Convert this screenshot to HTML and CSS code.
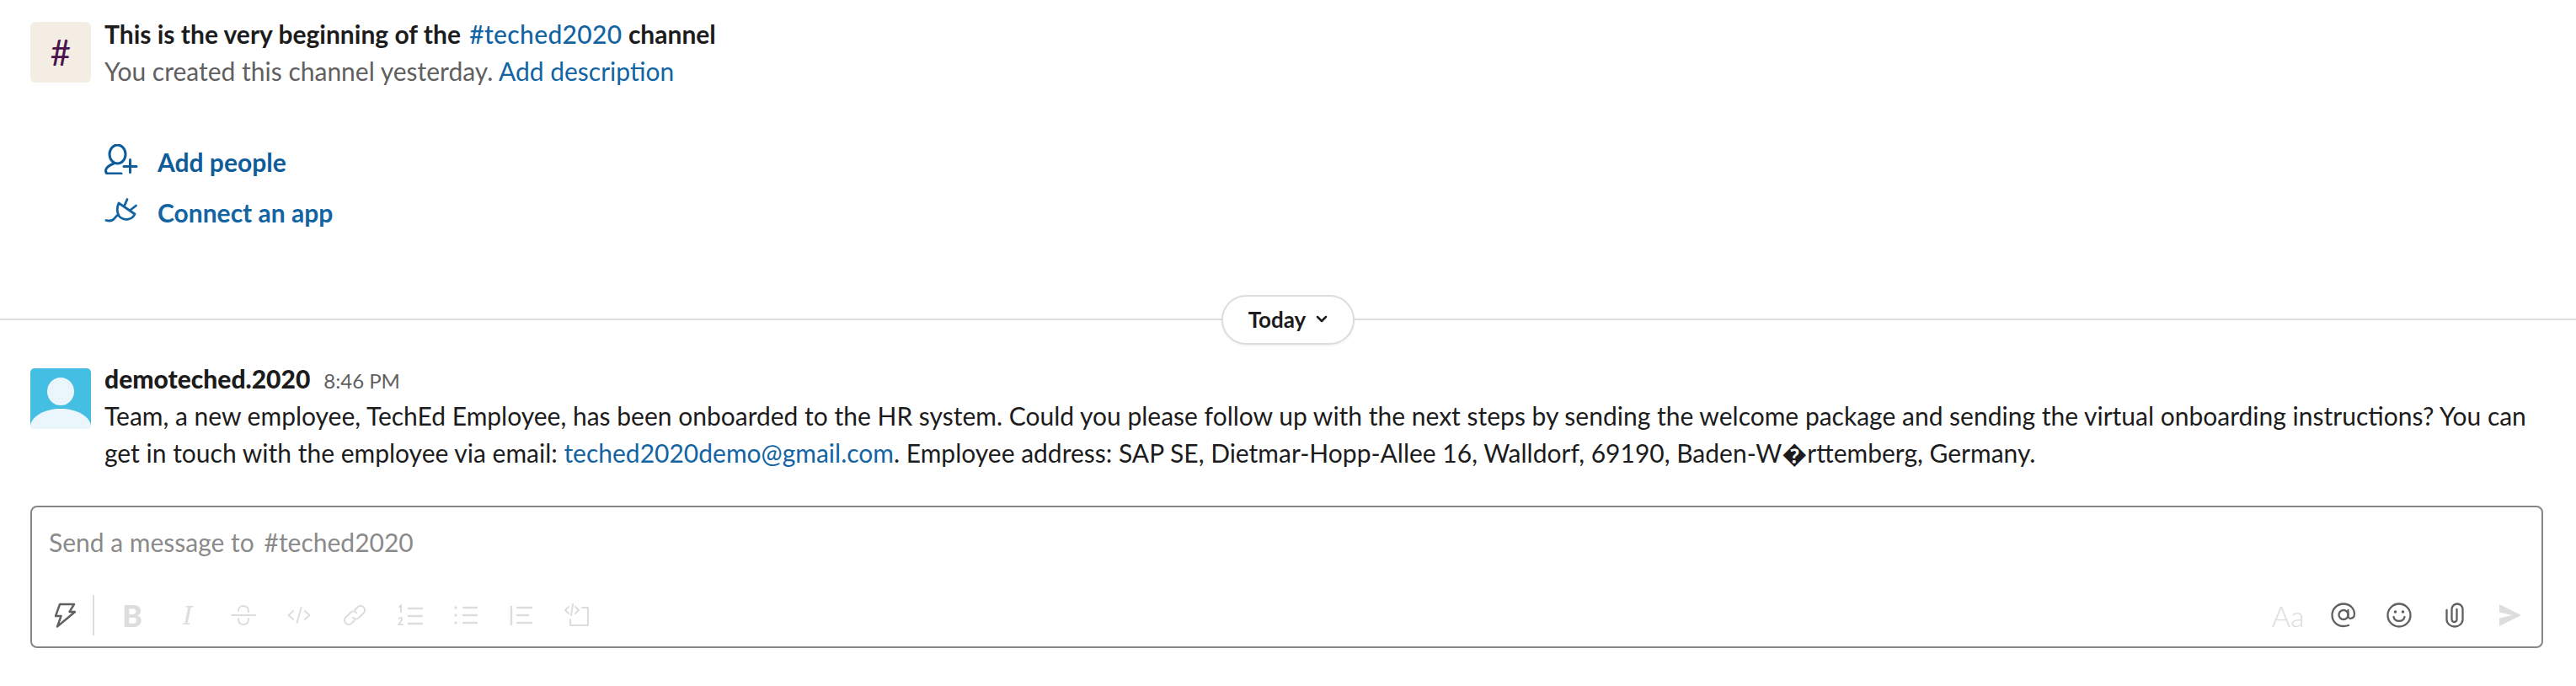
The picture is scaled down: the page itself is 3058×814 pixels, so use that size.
FILE: index.html
```html
<!DOCTYPE html>
<html>
  <head>
    <meta charset="utf-8" />
    <title>teched2020</title>
    <link rel="stylesheet" href="styles.css">
  </head>
  <body>
    <section class="intro">
      <div class="intro-head">
        <div class="channel-icon">#</div>
        <div class="intro-text">
          <div class="intro-title">This is the very beginning of the <a class="mention">#teched2020</a> channel</div>
          <div class="intro-sub">You created this channel yesterday. <a class="link">Add description</a></div>
        </div>
      </div>
      <div class="intro-actions">
        <a class="action action-people">
          <svg class="action-icon" width="40" height="36" viewBox="0 0 40 36" fill="none" stroke="#0f5c9a" stroke-width="3" stroke-linecap="round">
            <ellipse cx="15.500" cy="12" rx="9.500" ry="11"/>
            <path d="M11 23C5 25 1 29 1.500 32C1.500 34 3 35 5 35H20"/>
            <path d="M23 26.500H38M30.500 18.500V33.500"/>
          </svg>
          <span>Add people</span>
        </a>
        <a class="action">
          <svg class="action-icon" width="40" height="30" viewBox="0 0 40 30" fill="none" stroke="#1264a3" stroke-width="2.800" stroke-linecap="round" stroke-linejoin="round">
            <path d="M2 27.500C6 28.500 10 28 12 25C13.500 23 14.500 22 16.500 20.500"/>
            <path d="M27 2.500L23.500 10.500M37.500 10L30.500 15.500"/>
            <path d="M17 7L36 20C33 27 24 28 19 24C15 21 14 13 17 7Z"/>
          </svg>
          <span>Connect an app</span>
        </a>
      </div>
    </section>

    <div class="day-divider">
      <button class="day-pill">
        Today
        <svg width="14" height="10" viewBox="0 0 14 10" fill="none" stroke="#1d1c1d" stroke-width="2.500" stroke-linecap="round" stroke-linejoin="round"><path d="M2 2L7 7L12 2"/></svg>
      </button>
    </div>

    <div class="message">
      <svg class="avatar" width="72" height="72" viewBox="0 0 72 72">
        <rect width="72" height="72" rx="5" fill="#44bfe3"/>
        <ellipse cx="36" cy="27.500" rx="16" ry="16.500" fill="#eaf6fc"/>
        <path d="M0 68C2 56 18 48 36 48C54 48 70 56 72 68C72 70.500 70.500 72 68 72H4C1.500 72 0 70.500 0 68Z" fill="#eaf6fc"/>
      </svg>
      <div class="message-body">
        <div class="message-meta"><span class="sender">demoteched.2020</span><span class="time">8:46 PM</span></div>
        <div class="message-text">Team, a new employee, TechEd Employee, has been onboarded to the HR system. Could you please follow up with the next steps by sending the welcome package and sending the virtual onboarding instructions? You can get in touch with the employee via email: <a class="link">teched2020demo@gmail.com</a>. Employee address: SAP SE, Dietmar-Hopp-Allee 16, Walldorf, 69190, Baden-W&#xFFFD;rttemberg, Germany.</div>
      </div>
    </div>

    <div class="composer">
      <div class="composer-input">Send a message to <span class="composer-channel">#teched2020</span></div>
      <div class="toolbar">
        <div class="toolbar-left">
          <span class="tool">
            <svg width="26" height="30" viewBox="0 0 26 30" fill="none" stroke="#616061" stroke-width="2.400" stroke-linejoin="round">
              <path d="M7 2H24L18.500 11H25L4 28.500L8.500 16H2Z"/>
            </svg>
          </span>
          <span class="tool-sep"></span>
          <span class="tool tool-b">B</span>
          <span class="tool tool-i">I</span>
          <span class="tool">
            <svg width="30" height="26" viewBox="0 0 30 26" fill="none" stroke="#dddddd" stroke-width="2" stroke-linecap="round">
              <path d="M1 13H29"/>
              <path d="M21 9C21 5 18.500 2 15 2C11.500 2 9 4.500 9 8"/>
              <path d="M9 17C9 21.500 11.500 24 15 24C18.500 24 21 21.500 21 17"/>
            </svg>
          </span>
          <span class="tool">
            <svg width="28" height="22" viewBox="0 0 28 22" fill="none" stroke="#dddddd" stroke-width="2" stroke-linecap="round" stroke-linejoin="round">
              <path d="M7 6L1.500 11L7 16M21 6L26.500 11L21 16M16.500 2L11.500 20"/>
            </svg>
          </span>
          <span class="tool">
            <svg width="28" height="30" viewBox="0 0 28 30" fill="none" stroke="#dddddd" stroke-width="2" stroke-linecap="round">
              <path d="M14 9L18 5A5 5 0 0 1 25 12L19 18A5 5 0 0 1 12 18"/>
              <path d="M14 21L10 25A5 5 0 0 1 3 18L9 12A5 5 0 0 1 16 12"/>
            </svg>
          </span>
          <span class="tool">
            <svg width="30" height="28" viewBox="0 0 30 28" fill="none" stroke="#dddddd" stroke-width="2" stroke-linecap="round">
              <path d="M2 4L4 2.500V10M1.500 18C3 16 6 17 5 19.500L1.500 25H6"/>
              <path d="M13 6H29M13 15H29M13 24H29" stroke-width="2.500"/>
            </svg>
          </span>
          <span class="tool">
            <svg width="28" height="24" viewBox="0 0 28 24" fill="none" stroke="#dddddd" stroke-width="2.500" stroke-linecap="round">
              <path d="M2 3V3.100M2 12V12.100M2 21V21.100" stroke-width="3.500"/>
              <path d="M11 3H27M11 12H27M11 21H27"/>
            </svg>
          </span>
          <span class="tool">
            <svg width="28" height="24" viewBox="0 0 28 24" fill="none" stroke="#dddddd" stroke-width="2.500" stroke-linecap="round">
              <path d="M2 2V23"/>
              <path d="M9 3H26M9 12H22M9 21H26"/>
            </svg>
          </span>
          <span class="tool">
            <svg width="30" height="28" viewBox="0 0 30 28" fill="none" stroke="#dddddd" stroke-width="2" stroke-linecap="round" stroke-linejoin="round">
              <path d="M5 4L1 8L5 12M13 4L17 8L13 12M10 1L8 14"/>
              <path d="M21 5H28V26H7V19"/>
            </svg>
          </span>
        </div>
        <div class="toolbar-right">
          <span class="tool tool-aa">Aa</span>
          <span class="tool">
            <svg width="30" height="30" viewBox="0 0 30 30" fill="none" stroke="#616061" stroke-width="2.300" stroke-linecap="round">
              <circle cx="15" cy="14.500" r="5.500"/>
              <path d="M20.500 9V16C20.500 20.500 28 19.500 28 13.500C28 6.500 22 1.500 15 1.500C7.500 1.500 1.500 7.500 1.500 15C1.500 22.500 7.500 28 15 28C17 28 19 27.700 21 27"/>
            </svg>
          </span>
          <span class="tool">
            <svg width="30" height="30" viewBox="0 0 30 30" fill="none" stroke="#616061" stroke-width="2.300" stroke-linecap="round">
              <circle cx="15" cy="15" r="13.500"/>
              <path d="M8.500 17C10 23.500 20 23.500 21.500 17"/>
              <circle cx="10.500" cy="11" r="1.800" fill="#616061" stroke="none"/>
              <circle cx="19.500" cy="11" r="1.800" fill="#616061" stroke="none"/>
            </svg>
          </span>
          <span class="tool">
            <svg width="22" height="30" viewBox="0 0 22 30" fill="none" stroke="#616061" stroke-width="2.300" stroke-linecap="round">
              <path d="M1.500 9V20A9.500 8.500 0 0 0 20.500 20V8A6.500 6.500 0 0 0 7.500 8V20A3 3 0 0 0 13.500 20V8"/>
            </svg>
          </span>
          <span class="tool">
            <svg width="26" height="26" viewBox="0 0 26 26"><path d="M0 0L26 13L0 26V16.500L15 13L0 9.500Z" fill="#dddddd"/></svg>
          </span>
        </div>
      </div>
    </div>
  </body>
</html>
```

FILE: styles.css
```css
body,
html {
  margin: 0;
  padding: 0;
  height: 100%;
  overflow: hidden;
}
body {
  background-color: #fff;
  color: #1d1c1d;
  font-family: Lato, "Noto Sans", sans-serif;
  font-size: 30px;
}
a {
  text-decoration: none;
}
.link,
.mention {
  color: #1264a3;
}
.mention {
  font-weight: 500;
  letter-spacing: 0.35px;
  margin-left: 3px;
}

.intro {
  padding: 26px 36px 0;
  height: 349px;
  box-sizing: border-box;
}
.intro-head {
  display: flex;
  gap: 16px;
}
.channel-icon {
  width: 72px;
  height: 72px;
  border-radius: 6px;
  background-color: #f4ede4;
  color: #4a154b;
  font-size: 42px;
  line-height: 72px;
  text-align: center;
}
.intro-title {
  font-weight: 700;
  line-height: 40px;
  margin-top: -6px;
}
.intro-sub {
  color: #616061;
  line-height: 44px;
  margin-top: 2px;
}
.intro-actions {
  display: flex;
  flex-direction: column;
  padding: 56px 0 0 88px;
}
.action {
  display: flex;
  align-items: center;
  gap: 23px;
  height: 60px;
  color: #1264a3;
  font-weight: 700;
}
.action-people {
  color: #0f5c9a;
}
.action-icon {
  margin-bottom: 6px;
}

.day-divider {
  display: flex;
  justify-content: center;
  align-items: center;
  height: 60px;
  background: linear-gradient(#dddddd, #dddddd) center / 100% 2px no-repeat;
}
.day-pill {
  display: flex;
  align-items: center;
  gap: 12px;
  height: 59px;
  width: 158px;
  justify-content: center;
  padding: 0;
  border: 2px solid #dddddd;
  border-radius: 30px;
  background-color: #fff;
  color: #1d1c1d;
  font-family: inherit;
  font-size: 26px;
  font-weight: 700;
  box-shadow: 0 1px 3px rgba(0, 0, 0, 0.08);
}

.message {
  display: flex;
  gap: 16px;
  padding: 28px 36px 0;
}
.avatar {
  flex-shrink: 0;
}
.message-meta {
  display: flex;
  align-items: baseline;
  gap: 16px;
  line-height: 40px;
  margin-top: -8px;
}
.sender {
  font-weight: 900;
}
.time {
  color: #616061;
  font-size: 24px;
}
.message-text {
  line-height: 44px;
  margin-top: -1px;
}

.composer {
  margin: 41px 39px 0 36px;
  height: 169px;
  box-sizing: border-box;
  border: 2px solid #868686;
  border-radius: 8px;
  display: flex;
  flex-direction: column;
  justify-content: space-between;
  padding: 0 4px 13px 6px;
}
.composer-input {
  color: #8b8a8b;
  line-height: 44px;
  padding: 19px 0 0 14px;
}
.composer-channel {
  margin-left: 4px;
}
.toolbar {
  display: flex;
  justify-content: space-between;
  align-items: center;
  height: 48px;
}
.toolbar-left,
.toolbar-right {
  display: flex;
  align-items: center;
}
.tool {
  display: flex;
  justify-content: center;
  align-items: center;
  width: 66px;
  height: 48px;
}
.tool-sep {
  width: 2px;
  height: 48px;
  margin-right: 12px;
  background-color: #dddddd;
}
.tool-b,
.tool-i,
.tool-aa {
  color: #dddddd;
}
.tool-b {
  font-size: 36px;
  font-weight: 900;
}
.tool-i {
  font-family: "DejaVu Serif", serif;
  font-size: 30px;
  font-style: italic;
}
.tool-aa {
  font-size: 34px;
  font-weight: 300;
}
```
